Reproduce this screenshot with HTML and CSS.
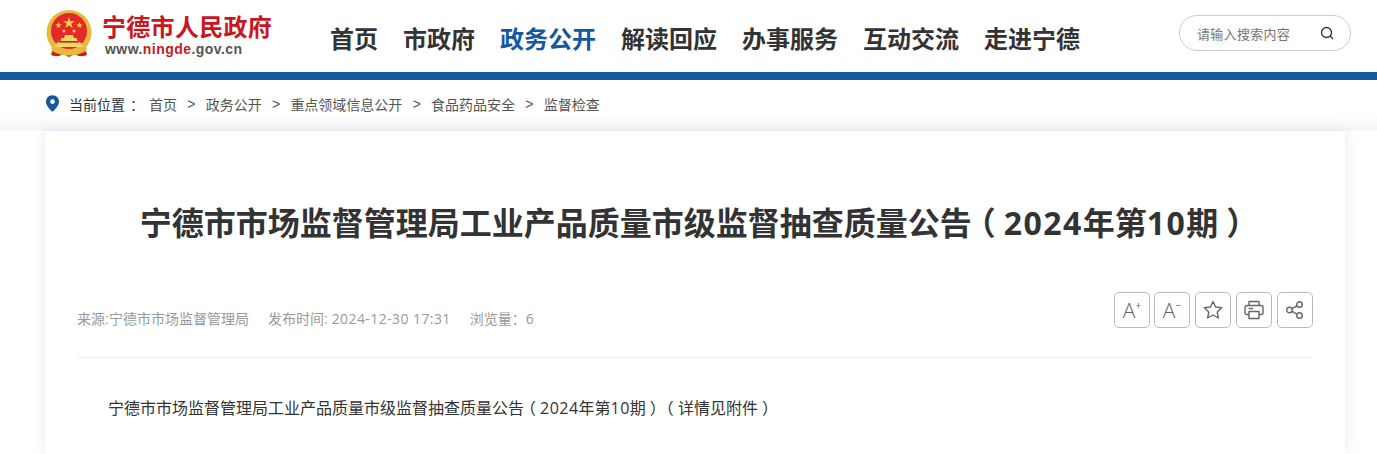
FILE: index.html
```html
<!DOCTYPE html>
<html lang="zh-CN">
<head>
  <meta charset="UTF-8" />
  <title>宁德市市场监督管理局工业产品质量市级监督抽查质量公告（2024年第10期）</title>
  <link rel="stylesheet" href="styles.css">
</head>
<body>
  <div class="header">
    <a href="#" class="logo">
      <svg class="logo-emblem" viewBox="0 0 46 48">
        <path d="M8 34 L5 45 Q12 48 17 44 L23 47 L29 44 Q34 48 41 45 L38 34 Z" fill="#c9211e" />
        <circle cx="23" cy="22.5" r="22.5" fill="#e8b93f" />
        <circle cx="23" cy="21" r="18" fill="#e5282a" />
        <path d="M23 7 L24.4 11.2 L28.8 11.2 L25.3 13.8 L26.6 18 L23 15.4 L19.4 18 L20.7 13.8 L17.2 11.2 L21.6 11.2 Z" fill="#f4cf4a" />
        <path d="M12.5 12 l.8 2.3 2.4 0 -1.9 1.5 .7 2.3 -2 -1.4 -2 1.4 .7 -2.3 -1.9 -1.5 2.4 0 Z" fill="#f4cf4a" />
        <path d="M33.5 12 l.8 2.3 2.4 0 -1.9 1.5 .7 2.3 -2 -1.4 -2 1.4 .7 -2.3 -1.9 -1.5 2.4 0 Z" fill="#f4cf4a" />
        <circle cx="18" cy="21" r="1.5" fill="#f4cf4a" />
        <circle cx="28" cy="21" r="1.5" fill="#f4cf4a" />
        <path d="M11 33 L15 30 L15 28 L18 28 L19 25 L27 25 L28 28 L31 28 L31 30 L35 33 L38 37 L8 37 Z" fill="#f4d465" />
        <rect x="13" y="31" width="20" height="1.6" fill="#c9211e" />
        <path d="M5 37 Q23 47 41 37 L40 41 Q23 50 6 41 Z" fill="#e8b93f" />
      </svg>
      <div class="logo-text">
        <div class="logo-name">宁德市人民政府</div>
        <div class="logo-url">www.<span>ningde</span>.gov.cn</div>
      </div>
    </a>
    <ul class="nav">
      <li><a href="#">首页</a></li>
      <li><a href="#">市政府</a></li>
      <li class="active"><a href="#">政务公开</a></li>
      <li><a href="#">解读回应</a></li>
      <li><a href="#">办事服务</a></li>
      <li><a href="#">互动交流</a></li>
      <li><a href="#">走进宁德</a></li>
    </ul>
    <div class="search">
      <span class="search-text">请输入搜索内容</span>
      <svg class="search-icon" viewBox="0 0 14 14">
        <circle cx="6.5" cy="6.5" r="5" />
        <path d="M10 10 L13 13" />
      </svg>
    </div>
  </div>

  <div class="crumbs">
    <svg class="pin" viewBox="0 0 14 18">
      <path fill-rule="evenodd" d="M7 0 C3 0 0 3 0 7 C0 11 4 15 7 18 C10 15 14 11 14 7 C14 3 11 0 7 0 Z M7 4.5 A2.5 2.5 0 1 1 7 9.5 A2.5 2.5 0 1 1 7 4.5 Z" />
    </svg>
    <span class="crumbs-label">当前位置<span class="colon">：</span></span>
    <a href="#">首页</a><i>&gt;</i>
    <a href="#">政务公开</a><i>&gt;</i>
    <a href="#">重点领域信息公开</a><i>&gt;</i>
    <a href="#">食品药品安全</a><i>&gt;</i>
    <a href="#">监督检查</a>
  </div>

  <div class="card">
    <h1 class="title">宁德市市场监督管理局工业产品质量市级监督抽查质量公告<span class="paren">（</span><span class="num">2024</span>年第<span class="num">10</span>期<span class="paren">）</span></h1>
    <div class="meta">
      <div class="meta-info">
        <span>来源:宁德市市场监督管理局</span>
        <span>发布时间: <span class="num">2024-12-30 17:31</span></span>
        <span>浏览量<span class="colon">：</span><span class="num">6</span></span>
      </div>
      <div class="tools">
        <button class="tool tool-font">A<sup>+</sup></button>
        <button class="tool tool-font">A<sup>−</sup></button>
        <button class="tool">
          <svg viewBox="0 0 20 20"><path d="M10 1.5 L12.6 7 L18.7 7.8 L14.2 12 L15.4 18 L10 15 L4.6 18 L5.8 12 L1.3 7.8 L7.4 7 Z" /></svg>
        </button>
        <button class="tool">
          <svg viewBox="0 0 20 20"><path d="M5 5.5 V1.5 H15 V5.5" /><path d="M5 14.5 H3 Q1 14.5 1 12.5 V7.5 Q1 5.5 3 5.5 H17 Q19 5.5 19 7.5 V12.5 Q19 14.5 17 14.5 H15" /><path d="M5 11.5 H15 V18.5 H5 Z" /><path d="M4.5 8.5 H9" /></svg>
        </button>
        <button class="tool">
          <svg viewBox="0 0 20 20"><circle cx="4.5" cy="10" r="2.8" /><circle cx="14.5" cy="4.5" r="2.8" /><circle cx="14.5" cy="15.5" r="2.8" /><path d="M7 8.6 L12 5.9" /><path d="M7 11.4 L12 14.1" /></svg>
        </button>
      </div>
    </div>
    <p class="content">宁德市市场监督管理局工业产品质量市级监督抽查质量公告<span class="paren">（</span><span class="num">2024</span>年第<span class="num">10</span>期<span class="paren">）</span><span class="paren">（</span>详情见附件<span class="paren">）</span></p>
  </div>
</body>
</html>
```

FILE: styles.css
```css
* { margin: 0; padding: 0; box-sizing: border-box; }
html, body { height: 100%; overflow: hidden; }
body {
  font-family: "Liberation Sans", "Noto Sans CJK SC", sans-serif;
  color: #333;
  background: #fff;
}
a { color: inherit; text-decoration: none; }

/* 数字和括号的字形 */
.num {
  font-family: "Open Sans", sans-serif;
  letter-spacing: 0.03em;
}
.paren {
  font-family: "Noto Sans CJK SC", sans-serif;
  font-feature-settings: "halt";
  padding: 0 0.25em;
}
.colon { font-family: "Noto Sans CJK TC", sans-serif; }

.header {
  display: flex;
  align-items: center;
  height: 80px;
  padding: 0 26px 0 46px;
  border-bottom: 8px solid #14589f;
}

.logo {
  display: flex;
  align-items: center;
  gap: 10px;
  width: 284px;
}
.logo-emblem { width: 46px; height: 48px; flex: none; margin-top: -4px; }
.logo-name {
  font-size: 24px;
  line-height: 26px;
  font-weight: 700;
  letter-spacing: 0.3px;
  color: #c9171e;
  white-space: nowrap;
}
.logo-url {
  font-size: 14px;
  line-height: 16px;
  font-weight: 700;
  color: #555;
  margin-left: 3px;
  letter-spacing: 0.45px;
}
.logo-url span { color: #c9171e; }

.nav {
  display: flex;
  gap: 25px;
  margin-top: 2px;
  list-style: none;
  font-size: 24px;
  font-weight: 700;
  color: #333;
  white-space: nowrap;
}
.nav .active { color: #14589f; }

.search {
  display: flex;
  align-items: center;
  justify-content: space-between;
  width: 172px;
  height: 36px;
  margin: 0 0 6px auto;
  padding: 0 16px 0 17px;
  border: 1px solid #ccc;
  border-radius: 18px;
}
.search-text { font-size: 13px; letter-spacing: 0.3px; color: #777; white-space: nowrap; }
.search-icon { width: 14px; height: 14px; fill: none; stroke: #333; stroke-width: 1.3; }

.crumbs {
  display: flex;
  align-items: center;
  height: 51px;
  padding: 0 0 4px 46px;
  font-size: 14px;
  color: #555;
  background: linear-gradient(#fff 65%, #f4f7fb);
}
.pin { width: 13px; height: 17px; fill: #14589f; margin-right: 10px; }
.crumbs-label { color: #333; width: 80px; white-space: nowrap; }
.crumbs-label .colon { margin-left: 5px; }
.crumbs i { font-style: normal; margin: 0 10.25px; }

.card {
  height: 323px;
  margin: 0 32px 0 45px;
  padding: 0 32px;
  background: #fff;
  box-shadow: 0 0 12px rgba(60, 90, 140, 0.14);
}

.title {
  padding-top: 68px;
  font-size: 32px;
  line-height: 44px;
  font-weight: 700;
  color: #333;
  text-align: center;
  white-space: nowrap;
}
.title .num { letter-spacing: 0.045em; }

.meta {
  display: flex;
  align-items: center;
  justify-content: space-between;
  margin-top: 45px;
  padding-bottom: 29px;
  border-bottom: 1px solid #eee;
}
.meta-info {
  display: flex;
  gap: 19px;
  padding-top: 17px;
  font-size: 14px;
  color: #999;
}

.tools { display: flex; gap: 5px; }
.tool {
  display: flex;
  align-items: center;
  justify-content: center;
  width: 36px;
  height: 36px;
  background: #fff;
  border: 1px solid #bbb;
  border-radius: 5px;
  color: #666;
  font-family: "Open Sans", sans-serif;
  font-weight: 300;
}
.tool:nth-child(2) { margin-left: -1px; }
.tool svg {
  width: 20px;
  height: 20px;
  fill: none;
  stroke: #666;
  stroke-width: 1.4;
  stroke-linejoin: round;
}
.tool-font { font-size: 21px; }
.tool-font sup { font-size: 10px; margin-top: -9px; line-height: 1; font-weight: 400; }

.content {
  margin-top: 39px;
  padding-left: 31px;
  font-size: 16px;
  line-height: 20px;
  color: #333;
  white-space: nowrap;
}
```
